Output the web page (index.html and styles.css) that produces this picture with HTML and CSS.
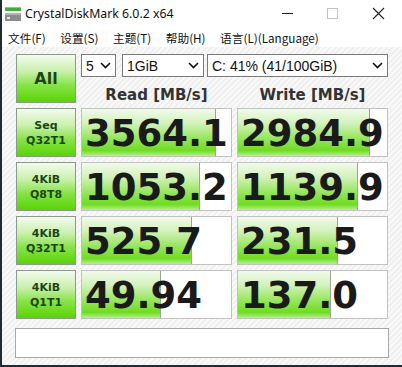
FILE: index.html
```html
<!DOCTYPE html>
<html lang="zh-CN">
<head>
    <meta charset="UTF-8">
    <title>CrystalDiskMark 6.0.2 x64</title>
    <link rel="stylesheet" href="styles.css">
</head>
<body>
    <div class="window">
        <div class="titlebar">
            <svg class="app-icon" width="16" height="15" viewBox="0 0 16 15">
                <rect x="0" y="0" width="16" height="4" fill="#3fae3f"/>
                <rect x="0" y="0" width="16" height="1" fill="#7fd07f"/>
                <rect x="0" y="6" width="16" height="8" fill="#8c8c8c"/>
                <rect x="0" y="6" width="16" height="2" fill="#b4b4b4"/>
                <rect x="2" y="10" width="3" height="2" fill="#e8e8e8"/>
            </svg>
            <span class="title">CrystalDiskMark 6.0.2 x64</span>
            <div class="controls">
                <svg width="46" height="27" viewBox="0 0 46 27"><line x1="18" y1="13.5" x2="29" y2="13.5" stroke="#222" stroke-width="1"/></svg>
                <svg width="46" height="27" viewBox="0 0 46 27"><rect x="17.5" y="8.5" width="10" height="10" fill="none" stroke="#c4c4c4" stroke-width="1"/></svg>
                <svg width="46" height="27" viewBox="0 0 46 27"><path d="M17 8 L28 19 M28 8 L17 19" stroke="#222" stroke-width="1.1"/></svg>
            </div>
        </div>

        <ul class="menubar">
            <li>文件(F)</li>
            <li>设置(S)</li>
            <li>主题(T)</li>
            <li>帮助(H)</li>
            <li>语言(L)(Language)</li>
        </ul>

        <div class="main">
            <div class="grid">
                <div class="btn btn-all">All</div>
                <div class="top-right">
                    <div class="selects">
                        <div class="select sel-count">5<svg class="chev" width="11" height="7" viewBox="0 0 11 7"><path d="M1 1 L5.5 5.5 L10 1" fill="none" stroke="#111" stroke-width="1.6"/></svg></div>
                        <div class="select sel-size">1GiB<svg class="chev" width="11" height="7" viewBox="0 0 11 7"><path d="M1 1 L5.5 5.5 L10 1" fill="none" stroke="#111" stroke-width="1.6"/></svg></div>
                        <div class="select sel-drive">C: 41% (41/100GiB)<svg class="chev" width="11" height="7" viewBox="0 0 11 7"><path d="M1 1 L5.5 5.5 L10 1" fill="none" stroke="#111" stroke-width="1.6"/></svg></div>
                    </div>
                    <div class="heads">
                        <div class="head">Read [MB/s]</div>
                        <div class="head">Write [MB/s]</div>
                    </div>
                </div>

                <div class="btn btn-label">Seq<br>Q32T1</div>
                <div class="cell"><div class="fill" style="width: 90%"></div><span class="num">3564.1</span></div>
                <div class="cell"><div class="fill" style="width: 88.5%"></div><span class="num">2984.9</span></div>

                <div class="btn btn-label">4KiB<br>Q8T8</div>
                <div class="cell"><div class="fill" style="width: 79%"></div><span class="num">1053.2</span></div>
                <div class="cell"><div class="fill" style="width: 80.5%"></div><span class="num">1139.9</span></div>

                <div class="btn btn-label">4KiB<br>Q32T1</div>
                <div class="cell"><div class="fill" style="width: 74%"></div><span class="num">525.7</span></div>
                <div class="cell"><div class="fill" style="width: 67%"></div><span class="num">231.5</span></div>

                <div class="btn btn-label">4KiB<br>Q1T1</div>
                <div class="cell"><div class="fill" style="width: 53%"></div><span class="num">49.94</span></div>
                <div class="cell"><div class="fill" style="width: 62.5%"></div><span class="num">137.0</span></div>
            </div>

            <div class="comment"></div>
        </div>
    </div>
</body>
</html>
```

FILE: styles.css
```css
body {
    margin: 0;
    background: #1f2d33;
    overflow: hidden;
}

.window {
    width: 400px;
    height: 365px;
    margin-left: 2px;
    background: #fff;
    display: flex;
    flex-direction: column;
}

.titlebar {
    height: 27px;
    display: flex;
    align-items: center;
    background: #fff;
}
.app-icon {
    margin-left: 3px;
    margin-right: 4px;
    margin-top: 1px;
}
.title {
    font-family: "Noto Sans", sans-serif;
    font-size: 12.3px;
    color: #111;
    flex: 1;
}
.controls {
    display: flex;
}

.menubar {
    list-style-type: none;
    margin: 0;
    padding: 0 0 0 5px;
    height: 20px;
    display: flex;
    align-items: center;
    gap: 12.5px;
    font-family: "Noto Sans CJK SC", "Noto Sans", sans-serif;
    font-size: 11.7px;
    color: #111;
}
.menubar li {
    padding: 0 1px;
}

.main {
    flex: 1;
    padding: 7px 13px 0 13px;
    background: repeating-linear-gradient(-45deg, #f9f9f9 0 2px, #f0f0f0 2px 4px);
}

.grid {
    display: grid;
    grid-template-columns: 60px 151px 151px;
    grid-template-rows: 49px 49px 49px 49px 49px;
    column-gap: 5px;
    row-gap: 5px;
    margin-left: 1px;
}

.btn {
    box-sizing: border-box;
    border: 1px solid #8c9a8c;
    background: linear-gradient(to bottom, #f4fbef 0%, #c9f0ac 35%, #86e345 65%, #5ad406 100%);
    color: #1d4514;
    font-family: "DejaVu Sans", sans-serif;
    font-weight: bold;
    display: flex;
    align-items: center;
    justify-content: center;
    text-align: center;
}
.btn-all {
    font-size: 16px;
}
.btn-label {
    font-size: 11px;
    line-height: 15px;
}

.top-right {
    grid-column: 2 / 4;
    display: flex;
    flex-direction: column;
}
.selects {
    display: flex;
    height: 23px;
}
.select {
    box-sizing: border-box;
    height: 23px;
    border: 1px solid #7a7a7a;
    background: #fff;
    font-family: "Liberation Sans", sans-serif;
    font-size: 14px;
    color: #111;
    display: flex;
    align-items: center;
    justify-content: space-between;
    padding: 0 4px 0 4px;
}
.sel-count {
    width: 35px;
}
.sel-size {
    width: 82px;
    margin-left: 6px;
}
.sel-drive {
    width: 181px;
    margin-left: 3px;
}

.heads {
    display: flex;
    gap: 5px;
    flex: 1;
    align-items: center;
    padding-top: 9px;
}
.head {
    width: 151px;
    text-align: center;
    font-family: "DejaVu Sans", sans-serif;
    font-weight: bold;
    font-size: 15px;
    color: #333;
}

.cell {
    box-sizing: border-box;
    position: relative;
    border: 1px solid #c2c2c2;
    background: #fff;
    display: flex;
    align-items: center;
}
.fill {
    position: absolute;
    left: 0;
    top: 0;
    bottom: 0;
    box-sizing: border-box;
    border-right: 1px solid #9aa59a;
    background: linear-gradient(to bottom, #f2faec 0%, #d3f2bb 30%, #98e65e 62%, #6fdc22 88%, #b8ee90 100%);
}
.num {
    position: relative;
    padding-left: 3px;
    font-family: "DejaVu Sans", sans-serif;
    font-weight: bold;
    font-size: 37px;
    color: #1a1a1a;
    white-space: nowrap;
    margin-top: 1px;
}

.comment {
    box-sizing: border-box;
    height: 30px;
    width: 374px;
    margin-top: 9px;
    border: 1px solid #a8a8a8;
    background: #fff;
}
```
